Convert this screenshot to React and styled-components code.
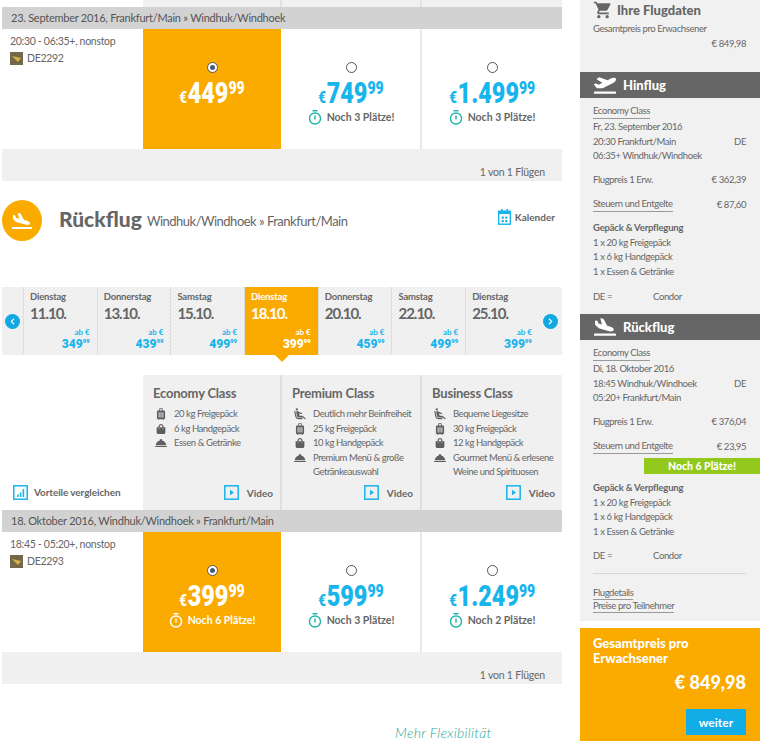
import React from "react";
import styled, { createGlobalStyle } from "styled-components";
import {
  FaPlaneArrival,
  FaPlaneDeparture,
  FaChevronLeft,
  FaChevronRight,
  FaShoppingBag,
} from "react-icons/fa";
import { MdShoppingCart, MdLuggage, MdRoomService, MdAirlineSeatReclineExtra } from "react-icons/md";

const GlobalStyle = createGlobalStyle`
  html, body { margin: 0; padding: 0; background: #fff; }
  * { box-sizing: border-box; }
`;

const hatch = `
  background-color: #f4f4f4;
  background-image: linear-gradient(135deg, #ececec 25%, transparent 25%, transparent 50%, #ececec 50%, #ececec 75%, transparent 75%);
  background-size: 4px 4px;
`;
const GRID = "141px 139px 140px 140px";

const Page = styled.div`
  width: 760px;
  height: 741px;
  overflow: hidden;
  display: flex;
  font-family: Lato, "Open Sans", sans-serif;
  color: #666;
`;
const Main = styled.main`
  width: 560px;
  margin-left: 2px;
  flex: none;
`;
const TopStub = styled.div`
  display: grid;
  grid-template-columns: ${GRID};
  height: 7px;
`;
const StubCell = styled.div`
  background: #f0f0f0;
  border-right: 2px solid #e2e2e2;
  &:first-child { background: none; border: none; }
  &:last-child { border: none; }
`;
const DateBar = styled.div`
  height: 22px;
  background: #d2d2d2;
  color: #555;
  font-size: 11px;
  letter-spacing: -0.25px;
  line-height: 22px;
  padding-left: 9px;
`;
const FareRow = styled.div`
  display: grid;
  grid-template-columns: ${GRID};
  height: 120px;
`;
const FlightInfo = styled.div`
  padding: 4px 0 0 8px;
  font-size: 10.5px;
  letter-spacing: -0.3px;
  line-height: 16px;
`;
const FlightCode = styled.div`
  display: flex;
  align-items: center;
  gap: 4px;
  margin-top: 1px;
`;
const AirlineLogo = styled.svg`
  width: 13px;
  height: 13px;
  flex: none;
`;
const FareCell = styled.div`
  display: flex;
  flex-direction: column;
  align-items: center;
  padding-top: 33px;
  background: ${(p) => (p.$selected ? "#fbab00" : "#fff")};
  border-right: ${(p) => (p.$selected || p.$last ? "none" : "2px solid #e8e8e8")};
  margin-right: ${(p) => (p.$selected ? "1px" : "0")};
`;
const Radio = styled.span`
  width: 11px;
  height: 11px;
  border-radius: 50%;
  border: 1px solid #555;
  background: #fff;
  display: flex;
  align-items: center;
  justify-content: center;
  &::after {
    content: "";
    width: 5px;
    height: 5px;
    border-radius: 50%;
    background: ${(p) => (p.$on ? "#4a5a78" : "transparent")};
  }
`;
const Price = styled.div`
  display: flex;
  align-items: baseline;
  height: 29px;
  margin-top: 5px;
  color: ${(p) => (p.$selected ? "#fff" : "#18b4ec")};
  font-family: Roboto, sans-serif;
  font-weight: 900;
  font-size: 30px;
  line-height: 29px;
  transform: scaleX(0.78);
`;
const Euro = styled.span`
  font-size: 17px;
  margin-right: 1px;
`;
const Cents = styled.sup`
  font-size: 18px;
  line-height: 20px;
  align-self: flex-start;
  margin: 0;
`;
const Seats = styled.div`
  display: flex;
  align-items: center;
  gap: 5px;
  margin-top: 3px;
  height: 14px;
  font-size: 10.5px;
  font-weight: 700;
  color: ${(p) => (p.$selected ? "#fff" : "#666")};
`;
const Stripes = styled.div`
  height: 32px;
  ${hatch}
  font-size: 10.5px;
  letter-spacing: -0.2px;
  text-align: right;
  padding: 17px 17px 0 0;
  line-height: 13px;
`;
const RouteHeader = styled.div`
  height: 106px;
  display: flex;
  align-items: flex-start;
  padding-top: 19px;
`;
const PlaneBadge = styled.div`
  width: 40px;
  height: 41px;
  border-radius: 50%;
  background: #fbab00;
  color: #fff;
  display: flex;
  align-items: center;
  justify-content: center;
  font-size: 20px;
  flex: none;
`;
const RouteTitle = styled.h2`
  margin: 6px 0 0 17px;
  width: 88px;
  font-size: 21px;
  line-height: 26px;
  font-weight: 900;
  color: #666;
  white-space: nowrap;
`;
const RouteName = styled.span`
  margin: 12px 0 0 0;
  font-size: 13px;
  letter-spacing: -0.5px;
  line-height: 18px;
`;
const CalendarLink = styled.a`
  margin: 9px 7px 0 auto;
  display: flex;
  align-items: center;
  gap: 4px;
  font-size: 10px;
  font-weight: 700;
  height: 16px;
`;
const DateStrip = styled.div`
  height: 68px;
  display: grid;
  grid-template-columns: 21px repeat(7, 73.7px) 1fr;
  ${hatch}
  position: relative;
`;
const ArrowCell = styled.div`
  display: flex;
  align-items: center;
  justify-content: center;
`;
const ArrowButton = styled.span`
  width: 15px;
  height: 15px;
  border-radius: 50%;
  background: #12a8e2;
  color: #fff;
  font-size: 7px;
  display: flex;
  align-items: center;
  justify-content: center;
`;
const DateCard = styled.div`
  position: relative;
  padding: 4px 7px 0 6px;
  border-left: 1px solid #ddd;
  background: ${(p) => (p.$active ? "#fbab00" : "none")};
  color: ${(p) => (p.$active ? "#fff" : "#666")};
  ${(p) =>
    p.$active &&
    `&::after {
      content: "";
      position: absolute;
      left: 30px;
      bottom: -7px;
      border: 7px solid transparent;
      border-bottom: 0;
      border-top-color: #fbab00;
    }`}
`;
const DayName = styled.div`
  font-size: 9.5px;
  letter-spacing: -0.2px;
  line-height: 12px;
  font-weight: 700;
`;
const DayDate = styled.div`
  font-size: 15px;
  letter-spacing: -1px;
  line-height: 20px;
  font-weight: 700;
`;
const FromLabel = styled.div`
  text-align: right;
  font-size: 8px;
  line-height: 10px;
  font-weight: 700;
  margin-top: 4px;
  color: ${(p) => (p.$active ? "#fff" : "#18b4ec")};
`;
const FromPrice = styled.div`
  text-align: right;
  font-size: 12px;
  line-height: 13px;
  margin-top: 1px;
  font-weight: 900;
  font-family: Roboto, sans-serif;
  color: ${(p) => (p.$active ? "#fff" : "#18b4ec")};
  sup { font-size: 6px; line-height: 0; }
`;
const ClassRow = styled.div`
  display: grid;
  grid-template-columns: ${GRID};
  grid-template-rows: 135px;
  margin-top: 20px;
`;
const CompareCell = styled.div`
  display: flex;
  align-items: flex-end;
  gap: 6px;
  padding: 0 0 10px 11px;
  font-size: 10px;
  letter-spacing: -0.1px;
  font-weight: 700;
  line-height: 15px;
`;
const ClassCard = styled.div`
  background: #f0f0f0;
  border-right: ${(p) => (p.$last ? "none" : "2px solid #e0e0e0")};
  padding: 10px 6px 10px 10px;
  display: flex;
  flex-direction: column;
`;
const ClassName = styled.h3`
  margin: 0 0 5px;
  font-size: 13px;
  letter-spacing: -0.2px;
  line-height: 17px;
  font-weight: 700;
  color: #666;
`;
const Feature = styled.div`
  display: flex;
  font-size: 9.5px;
  letter-spacing: -0.45px;
  line-height: 14.6px;
  gap: 6px;
`;
const FeatureIcon = styled.span`
  width: 15px;
  height: 14.6px;
  flex: none;
  color: #5f5f5f;
  font-size: 14px;
  display: flex;
  align-items: center;
  justify-content: center;
`;
const VideoLink = styled.div`
  margin-top: auto;
  display: flex;
  justify-content: flex-end;
  align-items: center;
  gap: 8px;
  padding-right: 1px;
  font-size: 10px;
  font-weight: 700;
  height: 15px;
`;
const Flexi = styled.div`
  margin: 40px 0 0 393px;
  font-size: 14px;
  line-height: 18px;
  font-style: italic;
  font-weight: 300;
  letter-spacing: 0.3px;
  color: #1fa898;
  white-space: nowrap;
`;

const Side = styled.aside`
  width: 180px;
  margin-left: 18px;
  flex: none;
  position: relative;
  font-size: 9.5px;
  letter-spacing: -0.4px;
  line-height: 14.6px;
`;
const SideCard = styled.div`
  background: #f1f1f1;
  height: 621px;
  position: relative;
`;
const SideSection = styled.div`
  padding: 0 14px 0 13px;
`;
const CartHead = styled.div`
  display: flex;
  align-items: center;
  gap: 4px;
  font-size: 13px;
  letter-spacing: 0;
  font-weight: 900;
  height: 20px;
  margin-bottom: 2px;
  svg { font-size: 20px; color: #666; }
`;
const SideBar = styled.div`
  height: 26px;
  background: #666;
  color: #fff;
  display: flex;
  align-items: center;
  gap: 7px;
  padding-left: 14px;
  font-size: 13px;
  letter-spacing: 0;
  font-weight: 900;
  margin-top: ${(p) => p.$top}px;
  margin-bottom: 7px;
  svg { font-size: 22px; }
`;
const SideRow = styled.div`
  display: flex;
  justify-content: ${(p) => (p.$left ? "flex-start" : p.$end ? "flex-end" : "space-between")};
  margin-top: ${(p) => p.$top || 0}px;
  white-space: nowrap;
`;
const Carrier = styled.span`
  margin-left: 41px;
`;
const Under = styled.span`
  border-bottom: 1px solid #999;
  line-height: 12px;
  height: 14px;
  display: inline-block;
`;
const SideLink = styled.div`
  border-bottom: 1px solid #999;
  line-height: 12px;
  height: 13px;
  width: fit-content;
`;
const BoldLabel = styled.div`
  font-weight: 700;
  letter-spacing: -0.2px;
  margin-top: ${(p) => p.$top || 0}px;
`;
const Rule = styled.div`
  height: 1px;
  background: #d6d6d6;
  margin: 9px 0 13px;
`;
const GreenBadge = styled.div`
  position: absolute;
  left: 64px;
  top: 458px;
  width: 116px;
  height: 16px;
  background: #93c91d;
  color: #fff;
  font-size: 10.5px;
  letter-spacing: 0;
  font-weight: 900;
  line-height: 16px;
  text-align: center;
`;
const TotalBox = styled.div`
  margin-top: 7px;
  height: 113px;
  background: #fbab00;
  color: #fff;
  padding: 8px 14px 0 13px;
  letter-spacing: 0;
`;
const TotalLabel = styled.div`
  font-size: 13px;
  line-height: 15px;
  font-weight: 900;
`;
const TotalPrice = styled.div`
  font-size: 18px;
  line-height: 22px;
  font-weight: 900;
  text-align: right;
  margin-top: 5px;
`;
const NextButton = styled.button`
  display: block;
  margin: 16px 0 0 auto;
  width: 60px;
  height: 26px;
  border: 0;
  background: #12ade6;
  color: #fff;
  font: 700 12px Lato, sans-serif;
`;

function AirlineMark() {
  return (
    <AirlineLogo viewBox="0 0 13 13">
      <rect width="13" height="13" fill="#75684a" />
      <path d="M2 4l9 2-3 4-3-3z" fill="#d8b24a" />
    </AirlineLogo>
  );
}

function TimerIcon({ color }) {
  return (
    <svg width="14" height="15" viewBox="0 0 14 15" fill="none" stroke={color} strokeWidth="1.4">
      <circle cx="7" cy="8.5" r="5.5" />
      <path d="M7 6v3M5 .8h4" strokeLinecap="round" />
    </svg>
  );
}

function CalendarIcon() {
  return (
    <svg width="13" height="16" viewBox="0 0 13 16">
      <rect x=".7" y="2.2" width="11.6" height="13" fill="none" stroke="#18b4ec" strokeWidth="1.4" />
      <path d="M0 2h13v3H0zM3 0h1.6v3H3zM8.4 0H10v3H8.4zM3.6 7.5h2.2v2.2H3.6zM7.2 7.5h2.2v2.2H7.2zM3.6 11h2.2v2.2H3.6zM7.2 11h2.2v2.2H7.2z" fill="#18b4ec" />
    </svg>
  );
}

function ChartIcon() {
  return (
    <svg width="15" height="15" viewBox="0 0 15 15">
      <rect x=".8" y=".8" width="13.4" height="13.4" fill="none" stroke="#18b4ec" strokeWidth="1.5" />
      <path d="M4 9.5h1.6V12H4zM6.8 7.5h1.6V12H6.8zM9.6 4h1.6v8H9.6z" fill="#18b4ec" />
    </svg>
  );
}

function PlayIcon() {
  return (
    <svg width="15" height="15" viewBox="0 0 15 15">
      <rect x=".8" y=".8" width="13.4" height="13.4" fill="none" stroke="#18b4ec" strokeWidth="1.5" />
      <path d="M6 4.8l4 2.7-4 2.7z" fill="#18b4ec" />
    </svg>
  );
}

function Fare({ amount, seats, selected, last }) {
  return (
    <FareCell $selected={selected} $last={last}>
      <Radio $on={selected} />
      <Price $selected={selected}>
        <Euro>€</Euro>
        {amount}
        <Cents>99</Cents>
      </Price>
      {seats && (
        <Seats $selected={selected}>
          <TimerIcon color={selected ? "#fff" : "#1fb5a8"} />
          {seats}
        </Seats>
      )}
    </FareCell>
  );
}

function FlightRow({ times, code, fares }) {
  return (
    <FareRow>
      <FlightInfo>
        {times}
        <FlightCode>
          <AirlineMark />
          {code}
        </FlightCode>
      </FlightInfo>
      {fares.map((f, i) => (
        <Fare key={i} {...f} selected={i === 0} last={i === 2} />
      ))}
    </FareRow>
  );
}

const days = [
  ["Dienstag", "11.10.", "349"],
  ["Donnerstag", "13.10.", "439"],
  ["Samstag", "15.10.", "499"],
  ["Dienstag", "18.10.", "399", true],
  ["Donnerstag", "20.10.", "459"],
  ["Samstag", "22.10.", "499"],
  ["Dienstag", "25.10.", "399"],
];

const seat = <MdAirlineSeatReclineExtra />;
const bag = <MdLuggage />;
const hand = <FaShoppingBag style={{ fontSize: 10 }} />;
const meal = <MdRoomService />;

const classes = [
  {
    name: "Economy Class",
    items: [[bag, "20 kg Freigepäck"], [hand, "6 kg Handgepäck"], [meal, "Essen & Getränke"]],
  },
  {
    name: "Premium Class",
    items: [
      [seat, "Deutlich mehr Beinfreiheit"],
      [bag, "25 kg Freigepäck"],
      [hand, "10 kg Handgepäck"],
      [meal, "Premium Menü & große Getränkeauswahl"],
    ],
  },
  {
    name: "Business Class",
    items: [
      [seat, "Bequeme Liegesitze"],
      [bag, "30 kg Freigepäck"],
      [hand, "12 kg Handgepäck"],
      [meal, "Gourmet Menü & erlesene Weine und Spirituosen"],
    ],
  },
];

function FlightSummary({ date, dep, arr, fare, tax, baggageGap = 9 }) {
  return (
    <SideSection>
      <SideRow><Under>Economy Class</Under></SideRow>
      <SideRow $top={1}>{date}</SideRow>
      <SideRow><span>{dep}</span><span>DE</span></SideRow>
      <SideRow>{arr}</SideRow>
      <SideRow $top={9}><span>Flugpreis 1 Erw.</span><span>€ {fare}</span></SideRow>
      <SideRow $top={10}><Under>Steuern und Entgelte</Under><span>€ {tax}</span></SideRow>
      <BoldLabel $top={baggageGap}>Gepäck &amp; Verpflegung</BoldLabel>
      <SideRow>1 x 20 kg Freigepäck</SideRow>
      <SideRow>1 x 6 kg Handgepäck</SideRow>
      <SideRow>1 x Essen &amp; Getränke</SideRow>
      <SideRow $left $top={10}><span>DE =</span><Carrier>Condor</Carrier></SideRow>
    </SideSection>
  );
}

export default function App() {
  return (
    <Page>
      <GlobalStyle />
      <Main>
        <TopStub>
          <StubCell /><StubCell /><StubCell /><StubCell />
        </TopStub>
        <DateBar>23. September 2016, Frankfurt/Main » Windhuk/Windhoek</DateBar>
        <FlightRow
          times="20:30 - 06:35+, nonstop"
          code="DE2292"
          fares={[
            { amount: "449" },
            { amount: "749", seats: "Noch 3 Plätze!" },
            { amount: "1.499", seats: "Noch 3 Plätze!" },
          ]}
        />
        <Stripes>1 von 1 Flügen</Stripes>

        <RouteHeader>
          <PlaneBadge><FaPlaneArrival /></PlaneBadge>
          <RouteTitle>Rückflug</RouteTitle>
          <RouteName>Windhuk/Windhoek » Frankfurt/Main</RouteName>
          <CalendarLink><CalendarIcon />Kalender</CalendarLink>
        </RouteHeader>

        <DateStrip>
          <ArrowCell><ArrowButton><FaChevronLeft /></ArrowButton></ArrowCell>
          {days.map(([day, date, price, active]) => (
            <DateCard key={date} $active={active}>
              <DayName>{day}</DayName>
              <DayDate>{date}</DayDate>
              <FromLabel $active={active}>ab €</FromLabel>
              <FromPrice $active={active}>{price}<sup>99</sup></FromPrice>
            </DateCard>
          ))}
          <ArrowCell><ArrowButton><FaChevronRight /></ArrowButton></ArrowCell>
        </DateStrip>

        <ClassRow>
          <CompareCell><ChartIcon />Vorteile vergleichen</CompareCell>
          {classes.map((c, i) => (
            <ClassCard key={c.name} $last={i === 2}>
              <ClassName>{c.name}</ClassName>
              {c.items.map(([icon, text]) => (
                <Feature key={text}>
                  <FeatureIcon>{icon}</FeatureIcon>
                  <span>{text}</span>
                </Feature>
              ))}
              <VideoLink><PlayIcon />Video</VideoLink>
            </ClassCard>
          ))}
        </ClassRow>

        <DateBar>18. Oktober 2016, Windhuk/Windhoek » Frankfurt/Main</DateBar>
        <FlightRow
          times="18:45 - 05:20+, nonstop"
          code="DE2293"
          fares={[
            { amount: "399", seats: "Noch 6 Plätze!" },
            { amount: "599", seats: "Noch 3 Plätze!" },
            { amount: "1.249", seats: "Noch 2 Plätze!" },
          ]}
        />
        <Stripes>1 von 1 Flügen</Stripes>
        <Flexi>Mehr Flexibilität</Flexi>
      </Main>

      <Side>
        <SideCard>
          <SideSection>
            <CartHead><MdShoppingCart />Ihre Flugdaten</CartHead>
            <SideRow>Gesamtpreis pro Erwachsener</SideRow>
            <SideRow $end>€ 849,98</SideRow>
          </SideSection>
          <SideBar $top={21}><FaPlaneDeparture />Hinflug</SideBar>
          <FlightSummary
            date="Fr, 23. September 2016"
            dep="20:30 Frankfurt/Main"
            arr="06:35+ Windhuk/Windhoek"
            fare="362,39"
            tax="87,60"
          />
          <SideBar $top={10}><FaPlaneArrival />Rückflug</SideBar>
          <FlightSummary
            date="Di, 18. Oktober 2016"
            dep="18:45 Windhuk/Windhoek"
            arr="05:20+ Frankfurt/Main"
            fare="376,04"
            tax="23,95"
            baggageGap={27}
          />
          <SideSection>
            <Rule />
            <SideLink>Flugdetails</SideLink>
            <SideLink>Preise pro Teilnehmer</SideLink>
          </SideSection>
          <GreenBadge>Noch 6 Plätze!</GreenBadge>
        </SideCard>
        <TotalBox>
          <TotalLabel>Gesamtpreis pro<br />Erwachsener</TotalLabel>
          <TotalPrice>€ 849,98</TotalPrice>
          <NextButton>weiter</NextButton>
        </TotalBox>
      </Side>
    </Page>
  );
}
